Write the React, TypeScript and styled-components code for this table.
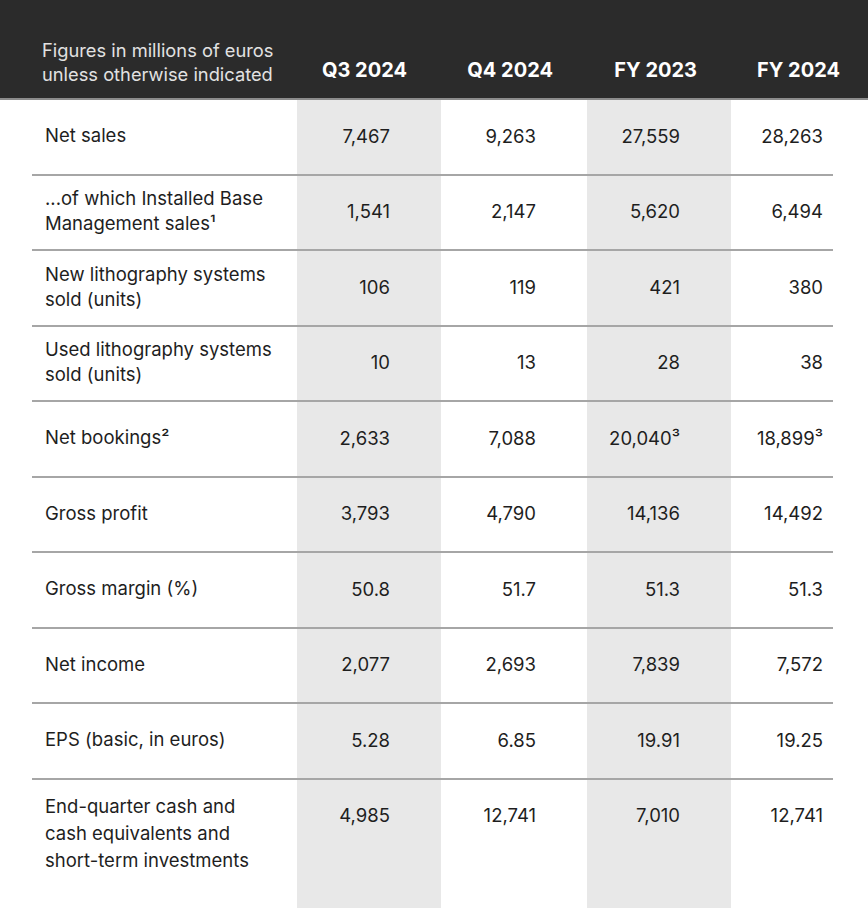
import React from "react";
import styled, { createGlobalStyle } from "styled-components";

const COLS = "297px 144px 146px 144px 1fr";

const GlobalStyle = createGlobalStyle`
	html, body {
		margin: 0;
		padding: 0;
		background: #ffffff;
	}
	body {
		font-family: Inter, "Liberation Sans", sans-serif;
		color: #1e1e1e;
		-webkit-font-smoothing: antialiased;
	}
`;

type Row = {
	label: string[];
	values: string[];
};

const rows: Row[] = [
	{ label: ["Net sales"], values: ["7,467", "9,263", "27,559", "28,263"] },
	{
		label: ["...of which Installed Base", "Management sales¹"],
		values: ["1,541", "2,147", "5,620", "6,494"],
	},
	{
		label: ["New lithography systems", "sold (units)"],
		values: ["106", "119", "421", "380"],
	},
	{
		label: ["Used lithography systems", "sold (units)"],
		values: ["10", "13", "28", "38"],
	},
	{ label: ["Net bookings²"], values: ["2,633", "7,088", "20,040³", "18,899³"] },
	{ label: ["Gross profit"], values: ["3,793", "4,790", "14,136", "14,492"] },
	{ label: ["Gross margin (%)"], values: ["50.8", "51.7", "51.3", "51.3"] },
	{ label: ["Net income"], values: ["2,077", "2,693", "7,839", "7,572"] },
	{ label: ["EPS (basic, in euros)"], values: ["5.28", "6.85", "19.91", "19.25"] },
	{
		label: ["End-quarter cash and", "cash equivalents and", "short-term investments"],
		values: ["4,985", "12,741", "7,010", "12,741"],
	},
];

const periods = ["Q3 2024", "Q4 2024", "FY 2023", "FY 2024"];

const App = () => {
	return (
		<Page>
			<GlobalStyle />
			<Head>
				<HeadLabel>
					Figures in millions of euros
					<br />
					unless otherwise indicated
				</HeadLabel>
				{periods.map((p, i) => (
					<HeadCell key={p} $last={i === periods.length - 1}>
						{p}
					</HeadCell>
				))}
			</Head>
			{rows.map((row, r) => {
				const isLast = r === rows.length - 1;
				return (
					<React.Fragment key={r}>
						{r > 0 && (
							<DividerRow>
								<Divider />
							</DividerRow>
						)}
						<BodyRow $tall={isLast}>
							<Label $tall={isLast}>
								{row.label.map((l, k) => (
									<span key={k}>{l}</span>
								))}
							</Label>
							{row.values.map((v, i) => (
								<Value
									key={i}
									$shade={i % 2 === 0}
									$last={i === row.values.length - 1}
									$tall={isLast}
								>
									{v}
								</Value>
							))}
						</BodyRow>
					</React.Fragment>
				);
			})}
		</Page>
	);
};

export default App;

const Page = styled.div`
	display: flex;
	flex-direction: column;
	min-height: 100vh;
	width: 100%;
	overflow: hidden;
`;

const Head = styled.div`
	display: grid;
	grid-template-columns: ${COLS};
	height: 100px;
	background-color: #2b2b2b;
	border-bottom: 2px solid #8c8c8c;
	box-sizing: border-box;
	flex-shrink: 0;
`;

const HeadLabel = styled.div`
	align-self: end;
	padding: 0 0 12px 42px;
	font-size: 18.3px;
	line-height: 24px;
	color: #e2e2e2;
	white-space: nowrap;
`;

const HeadCell = styled.div<{ $last?: boolean }>`
	align-self: end;
	text-align: right;
	padding: 0 ${(p) => (p.$last ? 28 : 34)}px 16px 0;
	font-size: 20px;
	line-height: 24px;
	font-weight: 700;
	color: #ffffff;
	white-space: nowrap;
`;

const BodyRow = styled.div<{ $tall?: boolean }>`
	display: grid;
	grid-template-columns: ${COLS};
	min-height: 73.5px;
	flex-grow: ${(p) => (p.$tall ? 1 : 0)};
	flex-shrink: 0;
`;

const Label = styled.div<{ $tall?: boolean }>`
	display: flex;
	flex-direction: column;
	justify-content: ${(p) => (p.$tall ? "flex-start" : "center")};
	padding: ${(p) => (p.$tall ? "13px 0 0 45px" : "0 0 2px 45px")};
	font-size: 18.5px;
	line-height: ${(p) => (p.$tall ? 27 : 25)}px;
	color: #1e1e1e;
	white-space: nowrap;
`;

const Value = styled.div<{ $shade?: boolean; $last?: boolean; $tall?: boolean }>`
	display: flex;
	align-items: ${(p) => (p.$tall ? "flex-start" : "center")};
	justify-content: flex-end;
	padding: ${(p) => (p.$tall ? "23px" : "0")} ${(p) => (p.$last ? 45 : 51)}px
		${(p) => (p.$tall ? "0" : "2px")} 0;
	background-color: ${(p) => (p.$shade ? "#e8e8e8" : "transparent")};
	font-size: 18.5px;
	line-height: 24px;
	color: #1e1e1e;
	white-space: nowrap;
`;

const DividerRow = styled.div`
	display: grid;
	grid-template-columns: ${COLS};
	height: 2px;
	flex-shrink: 0;
	background: linear-gradient(
		to right,
		transparent 297px,
		#e8e8e8 297px,
		#e8e8e8 441px,
		transparent 441px,
		transparent 587px,
		#e8e8e8 587px,
		#e8e8e8 731px,
		transparent 731px
	);
`;

const Divider = styled.div`
	grid-column: 1 / -1;
	margin: 0 35px 0 32px;
	height: 2px;
	background-color: #a6a6a6;
`;
